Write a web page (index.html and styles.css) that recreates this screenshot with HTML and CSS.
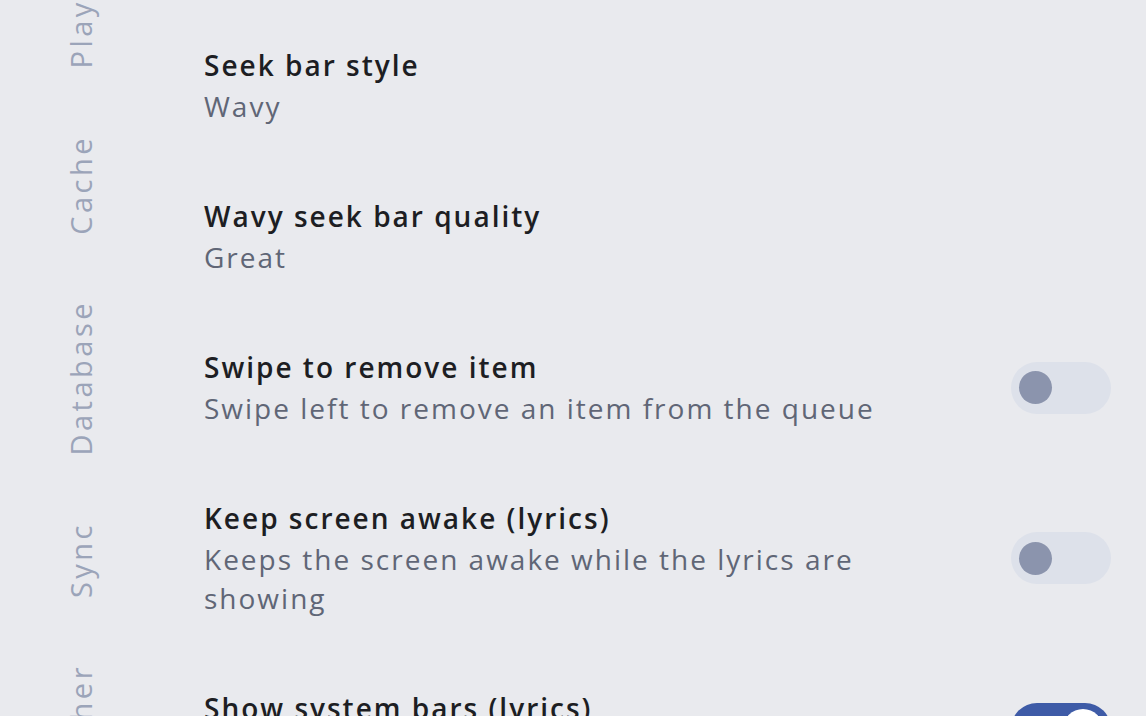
FILE: index.html
```html
<!DOCTYPE html>
<html lang="en">
<head>
    <meta charset="UTF-8">
    <meta name="viewport" content="width=device-width, initial-scale=1.0">
    <title>Settings</title>
    <link rel="stylesheet" href="styles.css">
</head>
<body>
    <div class="screen">
        <nav class="rail">
            <span class="rail-label">Player</span>
            <span class="rail-label">Cache</span>
            <span class="rail-label">Database</span>
            <span class="rail-label">Sync</span>
            <span class="rail-label">Other</span>
        </nav>

        <div class="prefs">
            <div class="pref">
                <div class="pref-text">
                    <div class="pref-title">Seek bar style</div>
                    <div class="pref-summary">Wavy</div>
                </div>
            </div>
            <div class="pref">
                <div class="pref-text">
                    <div class="pref-title">Wavy seek bar quality</div>
                    <div class="pref-summary">Great</div>
                </div>
            </div>
            <div class="pref">
                <div class="pref-text">
                    <div class="pref-title">Swipe to remove item</div>
                    <div class="pref-summary">Swipe left to remove an item from the queue</div>
                </div>
                <div class="switch"><span class="thumb"></span></div>
            </div>
            <div class="pref">
                <div class="pref-text">
                    <div class="pref-title">Keep screen awake (lyrics)</div>
                    <div class="pref-summary">Keeps the screen awake while the lyrics are showing</div>
                </div>
                <div class="switch"><span class="thumb"></span></div>
            </div>
            <div class="pref">
                <div class="pref-text">
                    <div class="pref-title">Show system bars (lyrics)</div>
                    <div class="pref-summary">Shows the status and navigation bars</div>
                </div>
                <div class="switch on"><span class="thumb"></span></div>
            </div>
        </div>
    </div>
</body>
</html>
```

FILE: styles.css
```css
body {
    margin: 0;
    font-family: "Open Sans", "Noto Sans", sans-serif;
    background-color: #e9eaee;
    overflow: hidden;
}
.screen {
    display: flex;
    height: 716px;
    overflow: hidden;
}
.rail {
    width: 204px;
    flex-shrink: 0;
    display: flex;
    flex-direction: column;
    align-items: flex-start;
    gap: 66px;
    padding-left: 66px;
    box-sizing: border-box;
    margin-top: -36px;
}
.rail-label {
    writing-mode: vertical-rl;
    transform: rotate(180deg);
    font-size: 29px;
    font-weight: 500;
    line-height: 30px;
    letter-spacing: 3.5px;
    color: #9ba4b9;
}
.prefs {
    flex: 1;
    padding-top: 10px;
    padding-right: 35px;
}
.pref {
    display: flex;
    align-items: center;
    padding: 35px 0;
}
.pref-text {
    flex: 1;
    padding-right: 100px;
}
.pref-title {
    font-size: 28px;
    font-weight: 600;
    line-height: 40px;
    letter-spacing: 2px;
    color: #1d1e23;
}
.pref-summary {
    font-size: 28px;
    font-weight: 500;
    line-height: 39px;
    letter-spacing: 2px;
    margin-top: 2px;
    color: #606676;
}
.switch {
    width: 100px;
    height: 52px;
    border-radius: 26px;
    background-color: #dde1ea;
    flex-shrink: 0;
    display: flex;
    align-items: center;
    padding: 0 8px;
    box-sizing: border-box;
}
.thumb {
    width: 33px;
    height: 33px;
    border-radius: 50%;
    background-color: #8b94ad;
}
.switch.on {
    background-color: #3e5ba7;
    justify-content: flex-end;
}
.switch.on .thumb {
    width: 40px;
    height: 40px;
    background-color: #ffffff;
}
```
